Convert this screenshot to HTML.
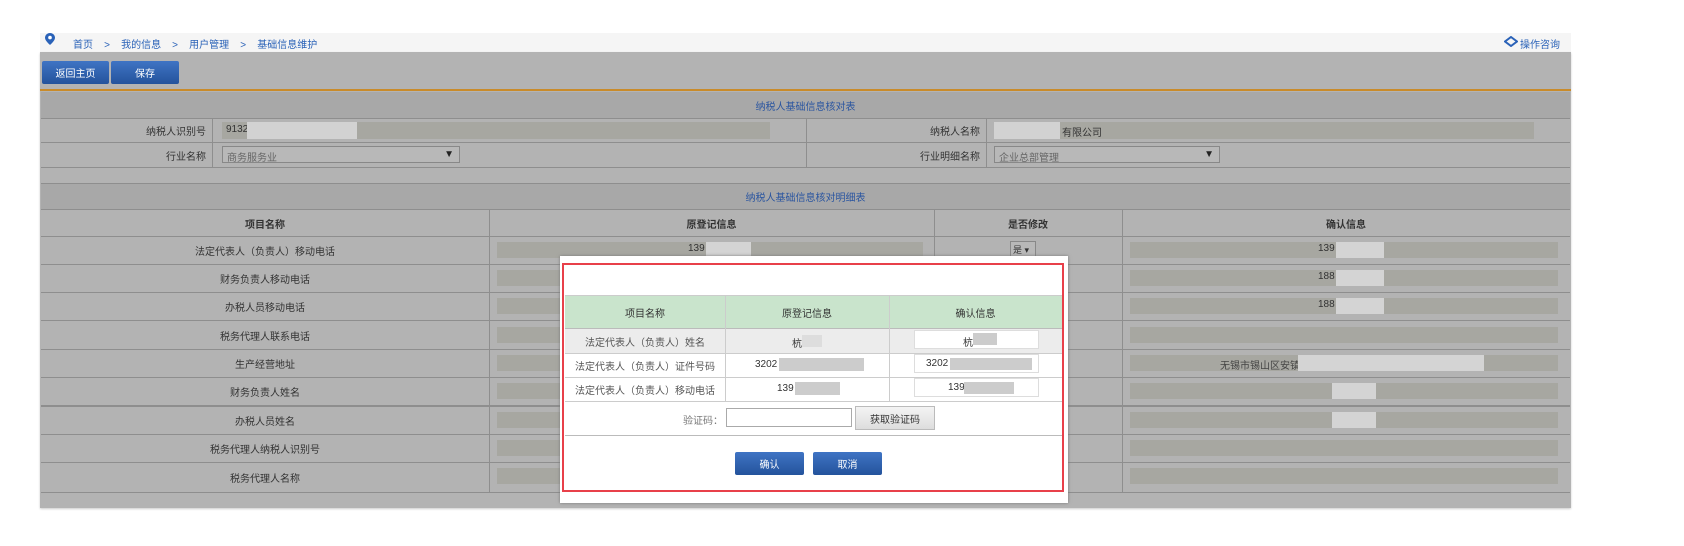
<!DOCTYPE html>
<html><head><meta charset="utf-8"><style>
*{margin:0;padding:0;box-sizing:border-box}
body{width:1684px;height:546px;background:#fff;position:relative;overflow:hidden;font-family:"Liberation Sans","Noto Sans CJK SC",sans-serif;font-size:10px;color:#333}
.a{position:absolute}
.t{position:absolute;display:flex;align-items:center;justify-content:center}
.inp{position:absolute;background:#a7a7a1}
.mask{position:absolute;background:#d4d4d4}
.hl{position:absolute;height:1px;background:#8e8e8e;left:41px;width:1529px}
.vl{position:absolute;width:1px;background:#8e8e8e}
.btn{position:absolute;background:linear-gradient(#3f74c4,#24539c);color:#fff;display:flex;align-items:center;justify-content:center;border-radius:2px}
</style></head><body>
<div class="a" style="left:40px;top:33px;width:1531px;height:19px;background:#f5f5f5"></div>
<svg class="a" style="left:45px;top:33px" width="10" height="12" viewBox="0 0 10 12"><path d="M5 0C2.2 0 0 2.2 0 4.8 0 8 5 12 5 12s5-4 5-7.2C10 2.2 7.8 0 5 0z" fill="#2a62b8"/><circle cx="5" cy="4.6" r="1.8" fill="#fff"/></svg>
<div class="a" style="left:73px;top:36px;color:#2a62b8;font-size:10px;white-space:pre">首页    &gt;    我的信息    &gt;    用户管理    &gt;    基础信息维护</div>
<svg class="a" style="left:1504px;top:36px" width="14" height="11" viewBox="0 0 14 11"><path d="M7 1L13 5.5 7 10 1 5.5z" fill="none" stroke="#2a62b8" stroke-width="2"/></svg>
<div class="a" style="left:1520px;top:36px;color:#2a62b8">操作咨询</div>

<div class="a" style="left:40px;top:52px;width:1531px;height:456px;background:#b3b3b3;box-shadow:0 1px 2px #ccc"></div>
<div class="btn" style="left:42px;top:61px;width:67px;height:23px">返回主页</div>
<div class="btn" style="left:111px;top:61px;width:68px;height:23px">保存</div>
<div class="a" style="left:40px;top:89px;width:1531px;height:2px;background:#c98b2a"></div>

<div class="t" style="left:41px;top:92px;width:1529px;height:26px;background:#a8a8a8;color:#2a55a0">纳税人基础信息核对表</div>
<div class="hl" style="top:118px"></div>
<div class="t" style="left:41px;top:119px;width:171px;height:23px;justify-content:flex-end;padding-right:6px">纳税人识别号</div>
<div class="vl" style="left:212px;top:119px;height:48px"></div>
<div class="inp" style="left:222px;top:122px;width:548px;height:17px"></div>
<div class="a" style="left:226px;top:124px">9132</div>
<div class="mask" style="left:247px;top:122px;width:110px;height:17px;background:#d2d2d2"></div>
<div class="vl" style="left:806px;top:119px;height:48px"></div>
<div class="t" style="left:806px;top:119px;width:180px;height:23px;justify-content:flex-end;padding-right:6px">纳税人名称</div>
<div class="vl" style="left:986px;top:119px;height:48px"></div>
<div class="inp" style="left:994px;top:122px;width:540px;height:17px"></div>
<div class="mask" style="left:994px;top:122px;width:66px;height:17px;background:#d2d2d2"></div>
<div class="a" style="left:1062px;top:124px">有限公司</div>
<div class="hl" style="top:142px"></div>
<div class="t" style="left:41px;top:143px;width:171px;height:24px;justify-content:flex-end;padding-right:6px">行业名称</div>
<div class="a" style="left:222px;top:146px;width:238px;height:17px;border:1px solid #888;background:#b8b8b8;padding:2px 4px;color:#666">商务服务业<span style="position:absolute;right:5px;color:#222">▼</span></div>
<div class="t" style="left:806px;top:143px;width:180px;height:24px;justify-content:flex-end;padding-right:6px">行业明细名称</div>
<div class="a" style="left:994px;top:146px;width:226px;height:17px;border:1px solid #888;background:#b8b8b8;padding:2px 4px;color:#666">企业总部管理<span style="position:absolute;right:5px;color:#222">▼</span></div>
<div class="hl" style="top:167px"></div>

<div class="hl" style="top:183px"></div>
<div class="t" style="left:41px;top:184px;width:1529px;height:25px;background:#a8a8a8;color:#2a55a0">纳税人基础信息核对明细表</div>
<div class="hl" style="top:209px"></div>
<div class="t" style="left:41px;top:210px;width:448px;height:26px;font-weight:bold">项目名称</div>
<div class="t" style="left:489px;top:210px;width:445px;height:26px;font-weight:bold">原登记信息</div>
<div class="t" style="left:934px;top:210px;width:188px;height:26px;font-weight:bold">是否修改</div>
<div class="t" style="left:1122px;top:210px;width:448px;height:26px;font-weight:bold">确认信息</div>
<div class="vl" style="left:489px;top:210px;height:282px"></div>
<div class="vl" style="left:934px;top:210px;height:282px"></div>
<div class="vl" style="left:1122px;top:210px;height:282px"></div>

<div class="hl" style="top:236px"></div>
<div class="t" style="left:41px;top:237px;width:448px;height:27px">法定代表人（负责人）移动电话</div>
<div class="hl" style="top:264px"></div>
<div class="t" style="left:41px;top:265px;width:448px;height:27px">财务负责人移动电话</div>
<div class="hl" style="top:292px"></div>
<div class="t" style="left:41px;top:293px;width:448px;height:27px">办税人员移动电话</div>
<div class="hl" style="top:320px"></div>
<div class="t" style="left:41px;top:321px;width:448px;height:28px">税务代理人联系电话</div>
<div class="hl" style="top:349px"></div>
<div class="t" style="left:41px;top:350px;width:448px;height:27px">生产经营地址</div>
<div class="hl" style="top:377px"></div>
<div class="t" style="left:41px;top:378px;width:448px;height:27px">财务负责人姓名</div>
<div class="hl" style="top:405px;height:2px"></div>
<div class="t" style="left:41px;top:407px;width:448px;height:27px">办税人员姓名</div>
<div class="hl" style="top:434px"></div>
<div class="t" style="left:41px;top:435px;width:448px;height:27px">税务代理人纳税人识别号</div>
<div class="hl" style="top:462px"></div>
<div class="t" style="left:41px;top:463px;width:448px;height:29px">税务代理人名称</div>
<div class="hl" style="top:492px"></div>

<div class="inp" style="left:497px;top:242px;width:426px;height:16px"></div>
<div class="a" style="left:688px;top:243px">139</div><div class="mask" style="left:706px;top:242px;width:45px;height:16px"></div>
<div class="inp" style="left:497px;top:270px;width:426px;height:16px"></div>
<div class="inp" style="left:497px;top:298px;width:426px;height:16px"></div>
<div class="inp" style="left:497px;top:327px;width:426px;height:16px"></div>
<div class="inp" style="left:497px;top:355px;width:426px;height:16px"></div>
<div class="inp" style="left:497px;top:383px;width:426px;height:16px"></div>
<div class="inp" style="left:497px;top:412px;width:426px;height:16px"></div>
<div class="inp" style="left:497px;top:440px;width:426px;height:16px"></div>
<div class="inp" style="left:497px;top:468px;width:426px;height:16px"></div>
<div class="a" style="left:1010px;top:241px;width:26px;height:16px;border:1px solid #888;background:#b8b8b8;font-size:9px;padding:1px 2px">是 ▾</div>

<div class="inp" style="left:1130px;top:242px;width:428px;height:16px"></div>
<div class="a" style="left:1318px;top:243px">139</div><div class="mask" style="left:1336px;top:242px;width:48px;height:16px"></div>
<div class="inp" style="left:1130px;top:270px;width:428px;height:16px"></div>
<div class="a" style="left:1318px;top:271px">188</div><div class="mask" style="left:1336px;top:270px;width:48px;height:16px"></div>
<div class="inp" style="left:1130px;top:298px;width:428px;height:16px"></div>
<div class="a" style="left:1318px;top:299px">188</div><div class="mask" style="left:1336px;top:298px;width:48px;height:16px"></div>
<div class="inp" style="left:1130px;top:327px;width:428px;height:16px"></div>
<div class="inp" style="left:1130px;top:355px;width:428px;height:16px"></div>
<div class="a" style="left:1220px;top:357px;color:#444">无锡市锡山区安镇街道</div><div class="mask" style="left:1298px;top:355px;width:186px;height:16px"></div>
<div class="inp" style="left:1130px;top:383px;width:428px;height:16px"></div>
<div class="mask" style="left:1332px;top:383px;width:44px;height:16px"></div>
<div class="inp" style="left:1130px;top:412px;width:428px;height:16px"></div>
<div class="mask" style="left:1332px;top:412px;width:44px;height:16px"></div>
<div class="inp" style="left:1130px;top:440px;width:428px;height:16px"></div>
<div class="inp" style="left:1130px;top:468px;width:428px;height:16px"></div>

<!-- modal -->
<div class="a" style="left:560px;top:256px;width:508px;height:247px;background:#fff;box-shadow:0 0 3px #777"></div>
<div class="a" style="left:562px;top:263px;width:502px;height:229px;border:2px solid #e8404a"></div>
<div class="a" style="left:565px;top:295px;width:497px;height:34px;background:#c9e4cc;border-top:1px solid #ccc;border-bottom:1px solid #bbb"></div>
<div class="t" style="left:565px;top:295px;width:160px;height:34px">项目名称</div>
<div class="t" style="left:725px;top:295px;width:164px;height:34px">原登记信息</div>
<div class="t" style="left:889px;top:295px;width:173px;height:34px">确认信息</div>
<div class="a" style="left:565px;top:329px;width:497px;height:24px;background:#ececec"></div>
<div class="a" style="left:565px;top:353px;width:497px;height:1px;background:#ccc"></div>
<div class="a" style="left:565px;top:377px;width:497px;height:1px;background:#ccc"></div>
<div class="a" style="left:565px;top:401px;width:497px;height:1px;background:#ccc"></div>
<div class="a" style="left:565px;top:435px;width:497px;height:1px;background:#bbb"></div>
<div class="a" style="left:725px;top:295px;width:1px;height:106px;background:#ccc"></div>
<div class="a" style="left:889px;top:295px;width:1px;height:106px;background:#ccc"></div>
<div class="t" style="left:565px;top:329px;width:160px;height:24px;color:#555">法定代表人（负责人）姓名</div>
<div class="t" style="left:565px;top:353px;width:160px;height:24px;color:#555">法定代表人（负责人）证件号码</div>
<div class="t" style="left:565px;top:377px;width:160px;height:24px;color:#555">法定代表人（负责人）移动电话</div>
<div class="a" style="left:792px;top:335px">杭</div><div class="mask" style="left:802px;top:335px;width:20px;height:12px;background:#ddd"></div>
<div class="a" style="left:755px;top:359px">3202</div><div class="mask" style="left:779px;top:358px;width:85px;height:13px;background:#ccc"></div>
<div class="a" style="left:777px;top:383px">139</div><div class="mask" style="left:795px;top:382px;width:45px;height:13px;background:#ccc"></div>
<div class="a" style="left:914px;top:330px;width:125px;height:19px;border:1px solid #ddd;background:#fff"></div>
<div class="a" style="left:963px;top:334px">杭</div><div class="mask" style="left:973px;top:333px;width:24px;height:12px;background:#ccc"></div>
<div class="a" style="left:914px;top:354px;width:125px;height:19px;border:1px solid #ddd;background:#fff"></div>
<div class="a" style="left:926px;top:358px">3202</div><div class="mask" style="left:950px;top:358px;width:82px;height:12px;background:#ccc"></div>
<div class="a" style="left:914px;top:378px;width:125px;height:19px;border:1px solid #ddd;background:#fff"></div>
<div class="a" style="left:948px;top:382px">139</div><div class="mask" style="left:964px;top:382px;width:50px;height:12px;background:#ccc"></div>
<div class="a" style="left:683px;top:412px;color:#777">验证码：</div>
<div class="a" style="left:726px;top:408px;width:126px;height:19px;border:1px solid #aaa;background:#fff"></div>
<div class="t" style="left:855px;top:406px;width:80px;height:24px;background:linear-gradient(#f4f4f4,#ddd);border:1px solid #bbb;color:#333">获取验证码</div>
<div class="btn" style="left:735px;top:452px;width:69px;height:23px">确认</div>
<div class="btn" style="left:813px;top:452px;width:69px;height:23px">取消</div>
</body></html>
